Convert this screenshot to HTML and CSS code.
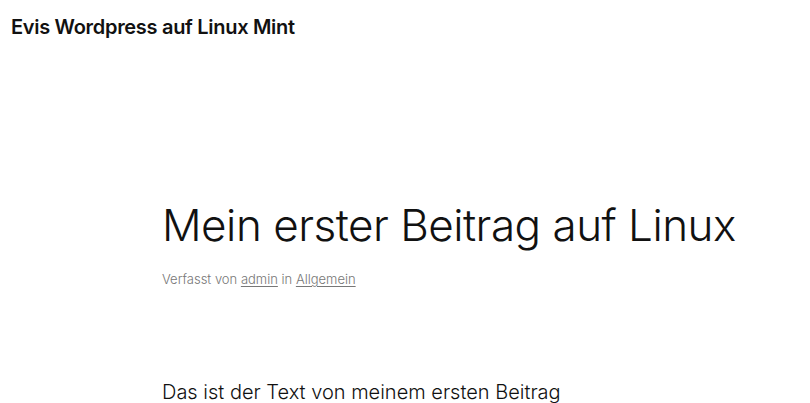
FILE: index.html
```html
<!DOCTYPE html>
<html lang="de">
<head>
    <meta charset="UTF-8">
    <meta name="viewport" content="width=device-width, initial-scale=1.0">
    <title>Mein erster Beitrag auf Linux – Evis Wordpress auf Linux Mint</title>
    <link rel="stylesheet" href="styles.css">
</head>
<body>
    <header class="site-header">
        <p class="site-title"><a href="#">Evis Wordpress auf Linux Mint</a></p>
    </header>

    <main class="site-main">
        <article class="post">
            <h1 class="post-title">Mein erster Beitrag auf Linux</h1>
            <div class="post-meta">
                Verfasst von <a href="#">admin</a> in <a href="#">Allgemein</a>
            </div>
            <div class="post-content">
                <p>Das ist der Text von meinem ersten Beitrag</p>
            </div>
        </article>
    </main>
</body>
</html>
```

FILE: styles.css
```css
* {
    margin: 0;
    padding: 0;
    box-sizing: border-box;
}
body {
    font-family: Inter, "Noto Sans", sans-serif;
    color: #111111;
    background: #ffffff;
    overflow-x: hidden;
}
a {
    color: inherit;
}
.site-header {
    padding: 14px 11px 0;
}
.site-title {
    font-size: 20px;
    font-weight: 600;
    letter-spacing: -0.3px;
    line-height: 26px;
}
.site-title a {
    text-decoration: none;
}
.site-main {
    padding: 0 20px 0 162px;
}
.post-title {
    margin-top: 157px;
    font-size: 44px;
    font-weight: 300;
    line-height: 56px;
    letter-spacing: -0.5px;
}
.post-meta {
    margin-top: 16px;
    font-size: 13px;
    font-weight: 300;
    color: #777777;
    line-height: 20px;
}
.post-meta a {
    text-decoration: underline;
    text-underline-offset: 2px;
}
.post-content {
    margin-top: 88px;
    font-size: 20px;
    font-weight: 300;
    line-height: 30px;
}
```
